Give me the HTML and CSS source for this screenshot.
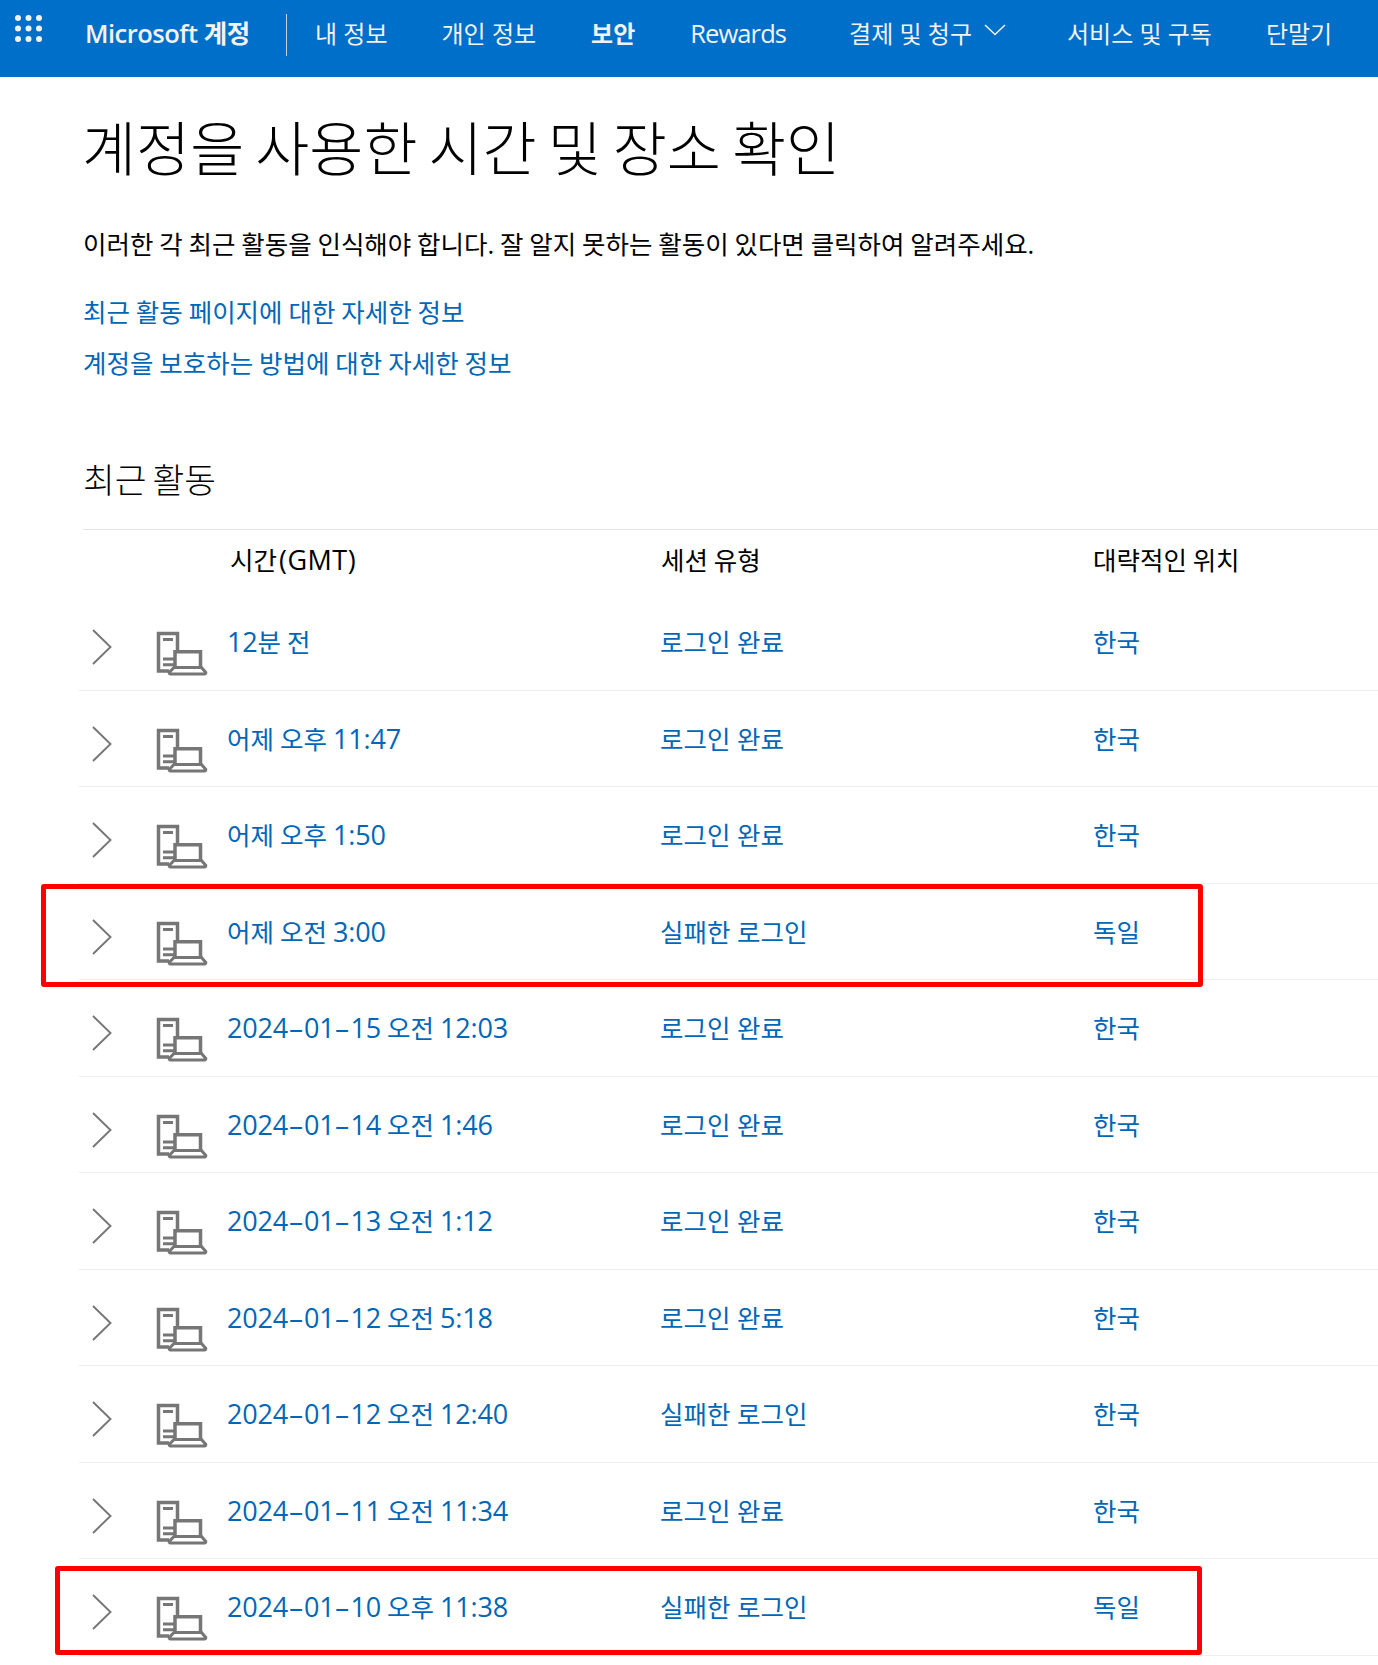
FILE: index.html
```
<!DOCTYPE html>
<html lang="ko">
<head>
    <meta charset="UTF-8">
    <meta name="viewport" content="width=device-width, initial-scale=1.0">
    <title>최근 활동 - Microsoft 계정</title>
    <link rel="stylesheet" href="styles.css">
</head>
<body>
    <!-- shared icons -->
    <svg class="icon-defs" width="0" height="0">
        <symbol id="chevron" viewBox="0 0 20 36">
            <path d="M1 1 L18.5 18 L1 35" fill="none" stroke="#767676" stroke-width="1.9"/>
        </symbol>
        <symbol id="device" viewBox="0 0 52 46">
            <g fill="none" stroke="#767676" stroke-width="3.5">
                <path d="M13 40H2.5V2.5H21.5V20"/>
                <path d="M7 8.5H17M7 28H18M7 33.8H18" stroke-width="2.9"/>
                <path d="M19 37V20.7H44.5V37"/>
                <path d="M18 36.5H45.5L49.8 41.5Q50 43 48.5 43H14.5Q13 43 13.2 41.5Z" stroke-width="3"/>
            </g>
        </symbol>
    </svg>

    <header class="top-bar">
        <svg class="waffle" width="28" height="28" viewBox="0 0 28 28" fill="#f2f2f2">
            <circle cx="3" cy="3" r="3"/><circle cx="13.5" cy="3" r="3"/><circle cx="24" cy="3" r="3"/>
            <circle cx="3" cy="13.5" r="3"/><circle cx="13.5" cy="13.5" r="3"/><circle cx="24" cy="13.5" r="3"/>
            <circle cx="3" cy="24" r="3"/><circle cx="13.5" cy="24" r="3"/><circle cx="24" cy="24" r="3"/>
        </svg>
        <a class="brand">Microsoft 계정</a>
        <nav class="nav">
            <a>내 정보</a>
            <a>개인 정보</a>
            <a class="active">보안</a>
            <a class="rewards">Rewards</a>
            <a class="has-menu">결제 및 청구
                <svg width="22" height="12" viewBox="0 0 22 12"><path d="M1 1 L11 10.5 L21 1" fill="none" stroke="#f2f2f2" stroke-width="1.5"/></svg>
            </a>
            <a>서비스 및 구독</a>
            <a>단말기</a>
        </nav>
    </header>

    <main class="content">
        <h1>계정을 사용한 시간 및 장소 확인</h1>
        <p class="intro">이러한 각 최근 활동을 인식해야 합니다. 잘 알지 못하는 활동이 있다면 클릭하여 알려주세요.</p>
        <div class="help-links">
            <a>최근 활동 페이지에 대한 자세한 정보</a>
            <a>계정을 보호하는 방법에 대한 자세한 정보</a>
        </div>
        <h2>최근 활동</h2>

        <div class="table-head">
            <span>시간<span class="gmt">(GMT)</span></span>
            <span>세션 유형</span>
            <span>대략적인 위치</span>
        </div>
        <div class="activity">
            <div class="row">
                <svg class="chevron"><use href="#chevron"/></svg>
                <svg class="device"><use href="#device"/></svg>
                <a class="time"><span class="num">12</span>분 전</a><a>로그인 완료</a><a>한국</a>
            </div>
            <div class="row">
                <svg class="chevron"><use href="#chevron"/></svg>
                <svg class="device"><use href="#device"/></svg>
                <a class="time">어제 오후 <span class="num">11:47</span></a><a>로그인 완료</a><a>한국</a>
            </div>
            <div class="row">
                <svg class="chevron"><use href="#chevron"/></svg>
                <svg class="device"><use href="#device"/></svg>
                <a class="time">어제 오후 <span class="num">1:50</span></a><a>로그인 완료</a><a>한국</a>
            </div>
            <div class="row">
                <svg class="chevron"><use href="#chevron"/></svg>
                <svg class="device"><use href="#device"/></svg>
                <a class="time">어제 오전 <span class="num">3:00</span></a><a>실패한 로그인</a><a>독일</a>
                <div class="mark mark-first"></div>
            </div>
            <div class="row">
                <svg class="chevron"><use href="#chevron"/></svg>
                <svg class="device"><use href="#device"/></svg>
                <a class="time"><span class="num">2024<i>-</i>01<i>-</i>15</span> 오전 <span class="num">12:03</span></a><a>로그인 완료</a><a>한국</a>
            </div>
            <div class="row">
                <svg class="chevron"><use href="#chevron"/></svg>
                <svg class="device"><use href="#device"/></svg>
                <a class="time"><span class="num">2024<i>-</i>01<i>-</i>14</span> 오전 <span class="num">1:46</span></a><a>로그인 완료</a><a>한국</a>
            </div>
            <div class="row">
                <svg class="chevron"><use href="#chevron"/></svg>
                <svg class="device"><use href="#device"/></svg>
                <a class="time"><span class="num">2024<i>-</i>01<i>-</i>13</span> 오전 <span class="num">1:12</span></a><a>로그인 완료</a><a>한국</a>
            </div>
            <div class="row">
                <svg class="chevron"><use href="#chevron"/></svg>
                <svg class="device"><use href="#device"/></svg>
                <a class="time"><span class="num">2024<i>-</i>01<i>-</i>12</span> 오전 <span class="num">5:18</span></a><a>로그인 완료</a><a>한국</a>
            </div>
            <div class="row">
                <svg class="chevron"><use href="#chevron"/></svg>
                <svg class="device"><use href="#device"/></svg>
                <a class="time"><span class="num">2024<i>-</i>01<i>-</i>12</span> 오전 <span class="num">12:40</span></a><a>실패한 로그인</a><a>한국</a>
            </div>
            <div class="row">
                <svg class="chevron"><use href="#chevron"/></svg>
                <svg class="device"><use href="#device"/></svg>
                <a class="time"><span class="num">2024<i>-</i>01<i>-</i>11</span> 오전 <span class="num">11:34</span></a><a>로그인 완료</a><a>한국</a>
            </div>
            <div class="row">
                <svg class="chevron"><use href="#chevron"/></svg>
                <svg class="device"><use href="#device"/></svg>
                <a class="time"><span class="num">2024<i>-</i>01<i>-</i>10</span> 오후 <span class="num">11:38</span></a><a>실패한 로그인</a><a>독일</a>
                <div class="mark mark-last"></div>
            </div>
        </div>
    </main>
</body>
</html>
```
FILE: styles.css
```
* {
    margin: 0;
    padding: 0;
    box-sizing: border-box;
}

body {
    font-family: "Open Sans", "Noto Sans CJK KR", sans-serif;
    font-size: 25.5px;
    line-height: 36px;
    color: #000;
    background: #fff;
    overflow: hidden;
    white-space: nowrap;
}

.icon-defs {
    display: block;
}

/* top bar */
.top-bar {
    display: flex;
    align-items: flex-start;
    height: 77px;
    padding: 14px 0 0 15px;
    background: #006fc9;
    color: #f2f2f2;
    font-size: 24px;
    line-height: 39px;
}

.waffle {
    flex: none;
    margin-top: 1px;
}

.brand {
    width: 201px;
    margin-left: 42px;
    font-size: 25.5px;
    font-weight: 600;
    letter-spacing: -0.5px;
}

.nav {
    display: flex;
    gap: 54px;
    height: 42px;
    padding-left: 28px;
    border-left: 1px solid #ccc;
}

.nav .active {
    margin: 0 1px;
    font-weight: bold;
}

.rewards {
    font-size: 25.5px;
    letter-spacing: -0.9px;
}

.has-menu {
    display: flex;
    gap: 12px;
    margin: 0 7px 0 9px;
}

.has-menu svg {
    margin-top: 10px;
}

/* page content */
.content {
    padding-left: 83px;
}

h1 {
    margin-left: -1px;
    padding-top: 31px;
    font-size: 58.8px;
    line-height: 80px;
    font-weight: 300;
    word-spacing: -4.3px;
}

.intro {
    margin-top: 38px;
    word-spacing: -0.8px;
}

.help-links {
    display: flex;
    flex-direction: column;
    gap: 15px;
    margin-top: 32px;
    word-spacing: -0.7px;
}

a {
    color: inherit;
}

.help-links a,
.row a {
    color: #0067b8;
}

h2 {
    margin-top: 75px;
    font-size: 34.5px;
    line-height: 48px;
    font-weight: 300;
    word-spacing: -3px;
}

.table-head {
    display: grid;
    grid-template-columns: 431px 432px 1fr;
    height: 65.4px;
    margin-top: 25px;
    padding: 12px 0 0 147px;
    border-top: 1px solid #e3e3e3;
    word-spacing: -0.8px;
}

.gmt {
    font-size: 27px;
    line-height: 1;
    letter-spacing: 0.5px;
    margin-left: 2px;
}

/* activity rows */
.activity {
    margin-left: -4px;
}

.row {
    position: relative;
    display: grid;
    grid-template-columns: 64px 72px 432px 433px 1fr;
    align-items: center;
    height: 96.5px;
    padding-left: 13px;
    border-bottom: 1px solid #efefef;
}

.time {
    margin-left: -1px;
    word-spacing: -0.5px;
}

.num {
    font-size: 27px;
    line-height: 1;
    letter-spacing: -0.2px;
}

/* wide date separators */
.num i {
    display: inline-block;
    width: 16px;
    font-style: normal;
    text-align: center;
    transform: scaleX(1.8);
}

.chevron {
    width: 20px;
    height: 36px;
    margin-top: 10px;
}

.device {
    width: 52px;
    height: 46px;
    margin-top: 24px;
}

/* boxes drawn over the suspicious sign-ins */
.mark {
    position: absolute;
    border: 5px solid #f00;
    border-radius: 3px;
}

.mark-first {
    left: -38px;
    top: 0;
    width: 1162px;
    height: 103px;
}

.mark-last {
    left: -24px;
    top: 6.6px;
    width: 1147px;
    height: 89px;
}
```
